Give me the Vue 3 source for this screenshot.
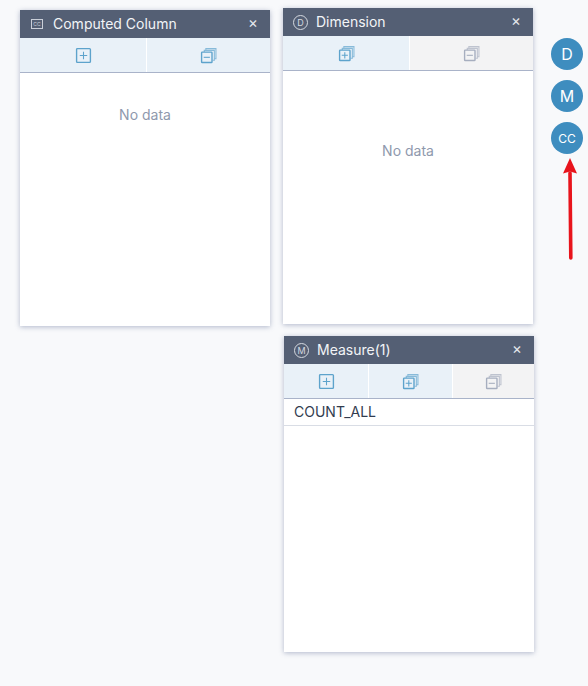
<template>
  <div class="page">
    <div class="col first">
      <section class="panel">
        <header class="head">
          <svg class="head-icon" viewBox="0 0 14 14" width="14" height="14"><rect x="1.5" y="2.5" width="11" height="9" fill="none" stroke="#c9ced8" stroke-width="1" /><text x="7" y="9.2" text-anchor="middle" class="cc-text">CC</text></svg>
          <span class="title">Computed Column</span>
          <span class="close">×</span>
        </header>
        <div class="tools two">
          <button class="tool on"><svg viewBox="0 0 16 16" width="17" height="17"><use href="#ico-add" /></svg></button>
          <button class="tool on"><svg viewBox="0 0 16 16" width="17" height="17"><use href="#ico-batch-minus" /></svg></button>
        </div>
        <div class="body empty near">No data</div>
      </section>
    </div>

    <div class="col second">
      <section class="panel">
        <header class="head">
          <span class="letter">D</span>
          <span class="title">Dimension</span>
          <span class="close">×</span>
        </header>
        <div class="tools two">
          <button class="tool on"><svg viewBox="0 0 16 16" width="17" height="17"><use href="#ico-batch-plus" /></svg></button>
          <button class="tool off"><svg viewBox="0 0 16 16" width="17" height="17"><use href="#ico-batch-minus" /></svg></button>
        </div>
        <div class="body empty far">No data</div>
      </section>

      <section class="panel shifted">
        <header class="head">
          <span class="letter">M</span>
          <span class="title">Measure(1)</span>
          <span class="close">×</span>
        </header>
        <div class="tools three">
          <button class="tool on"><svg viewBox="0 0 16 16" width="17" height="17"><use href="#ico-add" /></svg></button>
          <button class="tool on"><svg viewBox="0 0 16 16" width="17" height="17"><use href="#ico-batch-plus" /></svg></button>
          <button class="tool off"><svg viewBox="0 0 16 16" width="17" height="17"><use href="#ico-batch-minus" /></svg></button>
        </div>
        <div class="body">
          <div class="row" v-for="m in measures" :key="m">{{ m }}</div>
        </div>
      </section>
    </div>

    <div class="side">
      <button class="dot" v-for="d in dots" :key="d" :class="{ small: d === 'CC' }">{{ d }}</button>
    </div>

    <svg class="arrow" width="20" height="110" viewBox="0 0 20 110">
      <path d="M10.8 103 L10 18" stroke="#e8141c" stroke-width="3.6" stroke-linecap="round" fill="none" />
      <path d="M10 3 L17 18.5 L10 16.5 L3 18.5 Z" fill="#e8141c" />
    </svg>

    <svg width="0" height="0" class="defs">
      <defs>
        <g id="ico-add" fill="none" stroke="currentColor">
          <rect x="1.5" y="1.5" width="13" height="13" rx="0.8" stroke-width="1.3" />
          <path d="M8 4.5v7M4.5 8h7" stroke-width="1" />
        </g>
        <g id="ico-batch-plus" fill="none" stroke="currentColor">
          <path d="M5.5 3.2V1.5h9.5v9.5h-1.8M4 4.6V3.2h9.5v9.3h-1.6" stroke-width="1" opacity="0.7" />
          <rect x="1.5" y="4.8" width="9.8" height="9.8" rx="0.6" stroke-width="1.3" />
          <path d="M6.4 6.8v5.8M3.5 9.7h5.8" stroke-width="1" />
        </g>
        <g id="ico-batch-minus" fill="none" stroke="currentColor">
          <path d="M5.5 3.2V1.5h9.5v9.5h-1.8M4 4.6V3.2h9.5v9.3h-1.6" stroke-width="1" opacity="0.7" />
          <rect x="1.5" y="4.8" width="9.8" height="9.8" rx="0.6" stroke-width="1.3" />
          <path d="M3.5 9.7h5.8" stroke-width="1" />
        </g>
      </defs>
    </svg>
  </div>
</template>

<script setup>
const measures = ["COUNT_ALL"];
const dots = ["D", "M", "CC"];
</script>

<style scoped>
.page {
  position: relative;
  display: flex;
  align-items: flex-start;
  min-height: 686px;
  box-sizing: border-box;
  background: #f8f9fb;
  font-family: Inter, "Liberation Sans", sans-serif;
  overflow: hidden;
}
.col {
  display: flex;
  flex-direction: column;
  gap: 12px;
}
.first {
  margin: 10px 0 0 20px;
}
.second {
  margin: 8px 0 0 13px;
}
.panel {
  width: 250px;
  height: 316px;
  display: flex;
  flex-direction: column;
  background: #fff;
  box-shadow: 0 1px 5px rgba(70, 86, 130, 0.4);
}
.shifted {
  margin-left: 1px;
}
.head {
  flex: none;
  height: 28px;
  display: flex;
  align-items: center;
  padding: 0 12px 0 10px;
  background: #545f74;
  color: #f2f4f7;
}
.head-icon {
  flex: none;
  margin-right: 9px;
}
.cc-text {
  font-size: 5px;
  fill: #c9ced8;
}
.letter {
  flex: none;
  box-sizing: border-box;
  width: 15px;
  height: 15px;
  margin-right: 8px;
  border: 1px solid #d5d9e0;
  border-radius: 50%;
  font-size: 9px;
  line-height: 13px;
  text-align: center;
  color: #d5d9e0;
}
.title {
  flex: 1;
  padding-bottom: 2px;
  font-size: 14px;
}
.close {
  padding-bottom: 3px;
  font-size: 15px;
  line-height: 1;
  color: #e4e7ec;
}
.tools {
  flex: none;
  height: 34px;
  display: flex;
  gap: 1px;
  border-bottom: 1px solid #a9b3c9;
  box-sizing: content-box;
}
.tool {
  flex: 1;
  display: flex;
  align-items: center;
  justify-content: center;
  padding: 0;
  border: none;
}
.two .tool:first-child {
  flex: 0 0 126px;
}
.three .tool:first-child {
  flex: 0 0 84px;
}
.three .tool:nth-child(2) {
  flex: 0 0 83px;
}
.tool.on {
  background: #e9f1f8;
  color: #5da3cc;
}
.tool.off {
  background: #f3f3f4;
  color: #a6aebf;
}
.body {
  flex: 1;
}
.empty {
  text-align: center;
  font-size: 14px;
  color: #8f99ad;
}
.near {
  padding-top: 33px;
}
.far {
  padding-top: 71px;
}
.row {
  height: 26px;
  line-height: 26px;
  padding-left: 10px;
  font-size: 14px;
  color: #323c4f;
  border-bottom: 1px solid #d9dde5;
}
.side {
  margin: 38px 0 0 17px;
  display: flex;
  flex-direction: column;
  gap: 10px;
}
.dot {
  width: 32px;
  height: 32px;
  padding: 0;
  border: none;
  border-radius: 50%;
  background: #3e8dbf;
  color: #fff;
  font-family: inherit;
  font-size: 16px;
}
.dot.small {
  font-size: 12px;
}
.arrow {
  position: absolute;
  left: 560px;
  top: 155px;
}
.defs {
  position: absolute;
}
</style>
